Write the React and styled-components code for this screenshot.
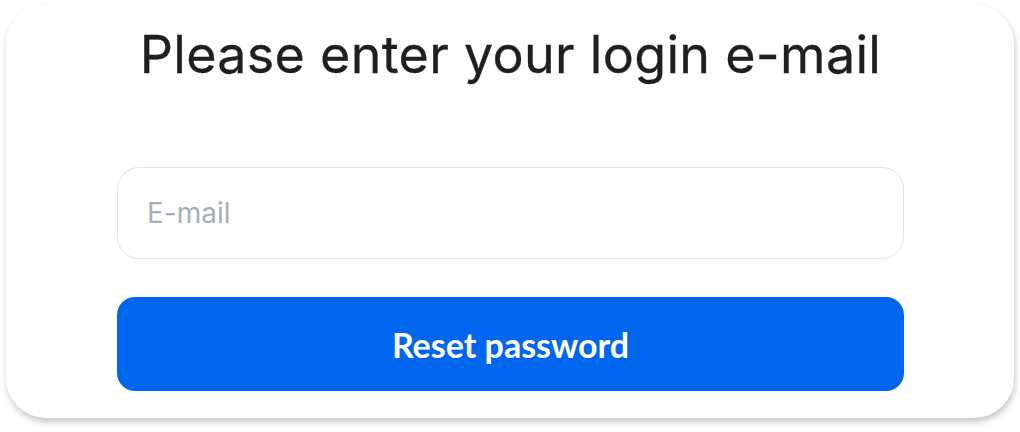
import React from 'react'
import styled, { createGlobalStyle } from 'styled-components'

const GlobalStyle = createGlobalStyle`
  html, body {
    margin: 0;
    padding: 0;
    background: #ffffff;
  }
  * {
    box-sizing: border-box;
  }
`

const Page = styled.div`
  width: 1020px;
  height: 432px;
  padding: 4px 6px 14px 6px;
  background: #ffffff;
  overflow: hidden;
`

const Card = styled.div`
  height: 414px;
  background: #ffffff;
  border-radius: 40px;
  box-shadow: 1px 4px 6px rgba(0, 0, 0, 0.22);
  display: flex;
  flex-direction: column;
  align-items: center;
  padding: 19px 110px 0 111px;
`

const Title = styled.h1`
  margin: 0;
  font-family: 'Inter', 'Liberation Sans', sans-serif;
  font-weight: 400;
  font-size: 52px;
  letter-spacing: 0.3px;
  line-height: 64px;
  color: #1f1f1f;
  text-align: center;
  -webkit-text-stroke: 0.3px #1f1f1f;
`

const Form = styled.form`
  width: 100%;
  margin-top: 80px;
  display: flex;
  flex-direction: column;
  gap: 38px;
`

const Input = styled.input`
  width: 100%;
  height: 92px;
  border: 1.5px solid #e3e5ec;
  border-radius: 22px;
  padding: 0 29px;
  font-family: 'Inter', 'Liberation Sans', sans-serif;
  font-size: 28px;
  color: #222222;
  outline: none;

  &::placeholder {
    color: #a7aebb;
  }
`

const Button = styled.button`
  width: 100%;
  height: 94px;
  border: none;
  border-radius: 18px;
  background: #0066ee;
  color: #ffffff;
  font-family: 'Lato', 'Liberation Sans', sans-serif;
  font-weight: 700;
  font-size: 34px;
  cursor: pointer;
`

export default function App() {
  return (
    <>
      <GlobalStyle />
      <Page>
        <Card>
          <Title>Please enter your login e-mail</Title>
          <Form onSubmit={(e) => e.preventDefault()}>
            <Input type="email" placeholder="E-mail" />
            <Button type="submit">Reset password</Button>
          </Form>
        </Card>
      </Page>
    </>
  )
}
